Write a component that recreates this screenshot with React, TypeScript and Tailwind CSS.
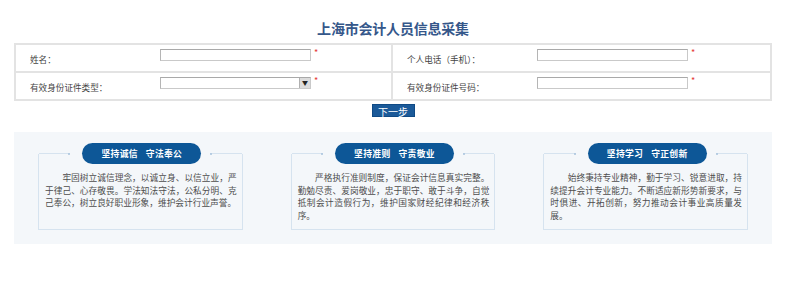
import React from 'react';

const cn = "font-['Noto_Sans_CJK_SC','Noto_Sans',sans-serif]";

const Field = ({ label, select, first }: { label: string; select?: boolean; first?: boolean }) => (
  <div className={`flex items-start h-[26px] ${first ? 'border-r-2 border-[#e3e3e3]' : ''}`}>
    <div className="w-[144px] pl-[14px] pt-[8px] text-[8.6px] leading-[12px] text-[#444]">{label}</div>
    <div className="mt-[4px] relative w-[151px] h-[12px] bg-white border border-[#c9c9c9] border-t-[#a9a9a9] border-l-[#b5b5b5]">
      {select && (
        <div className="absolute right-0 top-0 w-[11px] h-[10px] bg-[#dcdcdc] border-l border-[#b0b0b0] flex items-center justify-center text-[6px] leading-none text-[#222]">▼</div>
      )}
    </div>
    <span className="ml-[3px] mt-[3px] text-[9px] leading-[9px] text-[#e53935]">*</span>
  </div>
);

const Card = ({ a, b, text }: { a: string; b: string; text: string }) => (
  <div className="px-[24px] flex">
    <div className="flex-1 flex flex-col border-x border-b border-[#d6e3ef]">
      <div className="-mt-[11px] flex items-center h-[21px]">
        <div className="flex-1 h-px bg-[#d6e3ef] relative mr-[12px]">
          <span className="absolute right-0 -top-[0.5px] w-[2px] h-[2px] rounded-full bg-[#a9c3dc]" />
        </div>
        <div className="w-[119px] h-[21px] rounded-full bg-[#0d5797] text-white text-[8.8px] font-semibold flex items-center justify-center gap-[8px] tracking-[0.3px]">
          <span>{a}</span>
          <span>{b}</span>
        </div>
        <div className="flex-1 h-px bg-[#d6e3ef] relative ml-[9px]">
          <span className="absolute left-0 -top-[0.5px] w-[2px] h-[2px] rounded-full bg-[#a9c3dc]" />
        </div>
      </div>
      <p className="pt-[8px] pb-[7px] pl-[6px] pr-[5px] text-[8.7px] leading-[12.6px] text-[#4d4d4d] text-justify indent-[2em]">
        {text}
      </p>
    </div>
  </div>
);

export default function App() {
  return (
    <div className={`w-[800px] h-[281px] bg-white ${cn}`}>
      <div className="ml-[14px] w-[758px]">
        <h1 className="h-[43px] pt-[21px] text-center text-[14px] leading-[15px] font-bold text-[#35578a] tracking-[-0.2px]">
          上海市会计人员信息采集
        </h1>
        <div className="border-2 border-[#e3e3e3]">
          <div className="grid grid-cols-2 border-b-2 border-[#e3e3e3]">
            <Field label="姓名：" first />
            <Field label="个人电话（手机）：" />
          </div>
          <div className="grid grid-cols-2">
            <Field label="有效身份证件类型：" select first />
            <Field label="有效身份证件号码：" />
          </div>
        </div>
        <div className="flex justify-center mt-[3px]">
          <button className="w-[43px] h-[13px] bg-[#1b5a99] text-white text-[10px] leading-[13px] border border-[#0f4a85]">
            下一步
          </button>
        </div>
        <div className="mt-[15px] bg-[#f4f7fa] pt-[22px] pb-[14px] grid grid-cols-3">
          <Card
            a="坚持诚信"
            b="守法奉公"
            text="牢固树立诚信理念，以诚立身、以信立业，严于律己、心存敬畏。学法知法守法，公私分明、克己奉公，树立良好职业形象，维护会计行业声誉。"
          />
          <Card
            a="坚持准则"
            b="守责敬业"
            text="严格执行准则制度，保证会计信息真实完整。勤勉尽责、爱岗敬业，忠于职守、敢于斗争，自觉抵制会计造假行为，维护国家财经纪律和经济秩序。"
          />
          <Card
            a="坚持学习"
            b="守正创新"
            text="始终秉持专业精神，勤于学习、锐意进取，持续提升会计专业能力。不断适应新形势新要求，与时俱进、开拓创新，努力推动会计事业高质量发展。"
          />
        </div>
      </div>
    </div>
  );
}
